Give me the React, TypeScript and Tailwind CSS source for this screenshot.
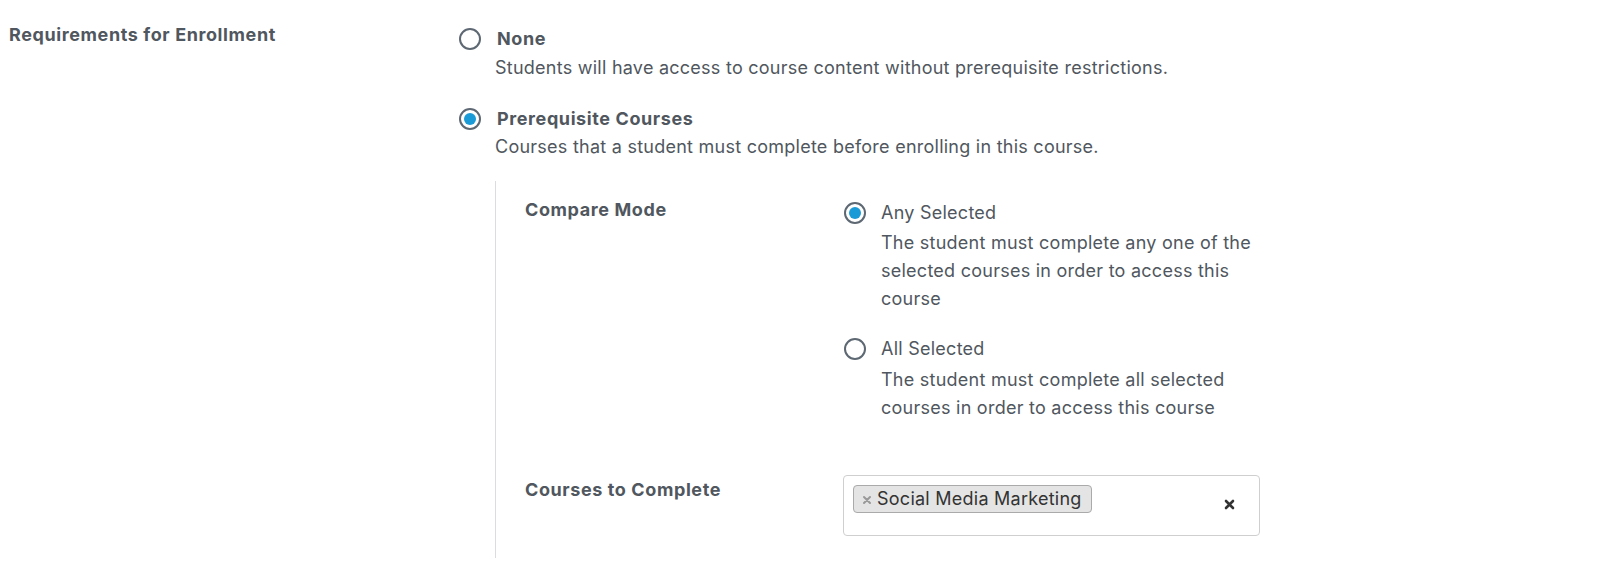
import React from "react";

function Radio({ checked }: { checked?: boolean }) {
  return (
    <span className="mt-[3px] flex h-[22px] w-[22px] shrink-0 items-center justify-center rounded-full border-[2px] border-[#5d6873] bg-white">
      {checked ? <span className="h-[12px] w-[12px] rounded-full bg-[#1a9ad6]" /> : null}
    </span>
  );
}

export default function App() {
  return (
    <div className="h-[562px] w-[1600px] overflow-hidden bg-white font-['Inter',sans-serif] text-[18px] leading-[28px] tracking-[0.25px] text-[#50575e]">
      <div className="flex pt-[21px]">
        <div className="w-[459px] shrink-0 pl-[9px] font-bold tracking-[0.6px]">Requirements for Enrollment</div>
        <div className="flex-1 pt-[4px]">
          <div className="flex items-start gap-[16px]">
            <Radio />
            <div className="font-bold tracking-[0.6px]">None</div>
          </div>
          <div className="mt-[1px] pl-[36px]">Students will have access to course content without prerequisite restrictions.</div>

          <div className="mt-[23px] flex items-start gap-[16px]">
            <Radio checked />
            <div className="font-bold tracking-[0.6px]">Prerequisite Courses</div>
          </div>
          <div className="pl-[36px]">Courses that a student must complete before enrolling in this course.</div>

          <div className="ml-[36px] mt-[20px] border-l border-[#dcdcde] pb-[22px] pl-[29px] pt-[15px]">
            <div className="flex items-start">
              <div className="w-[319px] shrink-0 font-bold tracking-[0.6px]">Compare Mode</div>
              <div className="pt-[3px]">
                <div className="flex items-start gap-[15px]">
                  <Radio checked />
                  <div>Any Selected</div>
                </div>
                <div className="mt-[2px] pl-[37px]">
                  The student must complete any one of the
                  <br />
                  selected courses in order to access this
                  <br />
                  course
                </div>
                <div className="mt-[22px] flex items-start gap-[15px]">
                  <Radio />
                  <div>All Selected</div>
                </div>
                <div className="mt-[3px] pl-[37px]">
                  The student must complete all selected
                  <br />
                  courses in order to access this course
                </div>
              </div>
            </div>

            <div className="mt-[53px] flex items-start">
              <div className="w-[318px] shrink-0 pt-[1px] font-bold tracking-[0.6px]">Courses to Complete</div>
              <div className="flex h-[61px] w-[417px] items-start justify-between rounded-[4px] border border-[#cfcfcf] bg-white pl-[9px] pt-[9px]">
                <span className="flex h-[28px] items-center rounded-[4px] border border-[#aaaaaa] bg-[#e4e4e4] pl-[8px] pr-[9px] text-[#333]">
                  <svg width="10" height="10" viewBox="0 0 10 10" className="mr-[5px] mt-[1px]">
                    <path d="M2 2 L8 8 M8 2 L2 8" stroke="#999" strokeWidth="2" strokeLinecap="round" />
                  </svg>
                  <span className="leading-[26px]">Social Media Marketing</span>
                </span>
                <svg width="11" height="11" viewBox="0 0 11 11" className="mr-[24px] mt-[14px]">
                  <path d="M2 2 L9 9 M9 2 L2 9" stroke="#333" strokeWidth="2.6" strokeLinecap="round" />
                </svg>
              </div>
            </div>
          </div>
        </div>
      </div>
    </div>
  );
}
